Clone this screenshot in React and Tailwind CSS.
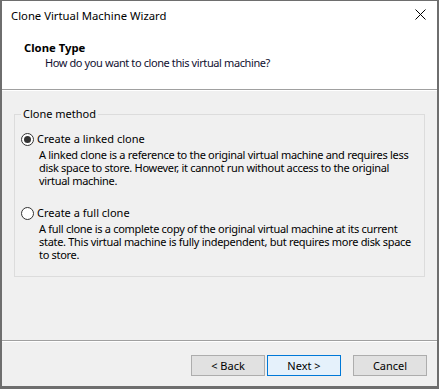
const font = { fontFamily: '"Noto Sans", "Open Sans", sans-serif' };

const Radio = ({ checked }) => (
	<span className="w-[13px] h-[13px] rounded-full border border-[#333] bg-white flex items-center justify-center shrink-0">
		{checked && <span className="w-[7px] h-[7px] rounded-full bg-[#333]" />}
	</span>
);

const Option = ({ checked, label, lines }) => (
	<div className="flex flex-col">
		<div className="flex items-center gap-[3px] h-[16px] pl-[6px]">
			<Radio checked={checked} />
			<span>{label}</span>
		</div>
		<div className="pl-[24px] leading-[13px] pt-[1px] whitespace-nowrap tracking-[-0.3px]">
			{lines.map(l => (
				<div key={l}>{l}</div>
			))}
		</div>
	</div>
);

const Button = ({ primary, children }) => (
	<button
		className={
			'w-[74px] h-[21px] border leading-none ' +
			(primary
				? 'bg-[#e5f1fb] border-[#0078d7]'
				: 'bg-[#e1e1e1] border-[#adadad]')
		}
	>
		{children}
	</button>
);

const App = () => {
	return (
		<div
			className="w-[439px] h-[389px] bg-[#6e6e6e] pl-[2px] pt-[1px] pr-[2px] pb-[3px] flex text-[11px] text-black"
			style={font}
		>
			<div className="flex-1 min-w-0 overflow-hidden flex flex-col bg-[#f0f0f0]">
				{/* title bar + header */}
				<div className="h-[88px] bg-white flex flex-col">
					<div className="h-[30px] flex items-center justify-between pl-[9px] pr-[9px]">
						<span className="text-[11.3px]">Clone Virtual Machine Wizard</span>
						<svg width="11" height="11" viewBox="0 0 11 11" className="mr-[2px] -mt-[3px]">
							<path d="M0.5 0.5 L10.5 10.5 M10.5 0.5 L0.5 10.5" stroke="#000" strokeWidth="1" />
						</svg>
					</div>
					<div className="pl-[22px] pt-[9px] flex flex-col">
						<span className="font-bold leading-[15px] text-[11.3px]">Clone Type</span>
						<span className="pl-[21px] leading-[15px] text-[#101030] tracking-[-0.4px]">
							How do you want to clone this virtual machine?
						</span>
					</div>
				</div>
				<div className="h-px bg-[#a0a0a0]" />
				<div className="h-px bg-white" />

				{/* body */}
				<div className="flex-1 px-[12px] pt-[23px]">
					<div className="relative border border-[#dcdcdc] h-[163px] flex flex-col gap-[18px] pt-[16px]">
						<span className="absolute -top-[8px] left-[6px] px-[2px] leading-[14px] bg-[#f0f0f0]">
							Clone method
						</span>
						<Option
							checked
							label="Create a linked clone"
							lines={[
								'A linked clone is a reference to the original virtual machine and requires less',
								'disk space to store. However, it cannot run without access to the original',
								'virtual machine.',
							]}
						/>
						<Option
							label="Create a full clone"
							lines={[
								'A full clone is a complete copy of the original virtual machine at its current',
								'state. This virtual machine is fully independent, but requires more disk space',
								'to store.',
							]}
						/>
					</div>
				</div>

				<div className="h-px bg-[#a0a0a0]" />
				<div className="h-px bg-white" />

				{/* footer */}
				<div className="h-[44px] flex items-start justify-end pt-[13px] pr-[10px]">
					<div className="flex gap-[2px]">
						<Button>&lt; Back</Button>
						<Button primary>Next &gt;</Button>
					</div>
					<div className="ml-[12px]">
						<Button>Cancel</Button>
					</div>
				</div>
			</div>
		</div>
	);
};

export default App;
